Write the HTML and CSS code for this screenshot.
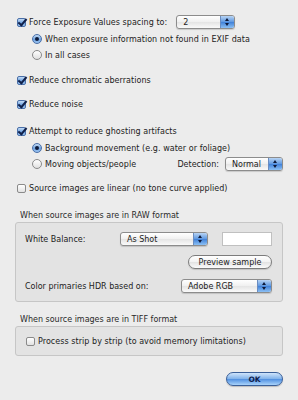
FILE: index.html
```html
<!DOCTYPE html>
<html>
<head>
<meta charset="utf-8">
<link rel="stylesheet" href="styles.css">
</head>
<body>
<div class="dialog">
  <div class="row r1">
    <span class="cb on"></span><span class="lbl">Force Exposure Values spacing to:</span>
    <span class="select sel-2"><span class="val">2</span><span class="arrows"></span></span>
  </div>
  <div class="row sub r2"><span class="radio on"></span><span class="lbl">When exposure information not found in EXIF data</span></div>
  <div class="row sub r3"><span class="radio"></span><span class="lbl">In all cases</span></div>
  <div class="row r4"><span class="cb on"></span><span class="lbl">Reduce chromatic aberrations</span></div>
  <div class="row r5"><span class="cb on"></span><span class="lbl">Reduce noise</span></div>
  <div class="row r6"><span class="cb on"></span><span class="lbl">Attempt to reduce ghosting artifacts</span></div>
  <div class="row sub r7"><span class="radio on"></span><span class="lbl">Background movement (e.g. water or foliage)</span></div>
  <div class="row sub r8"><span class="radio"></span><span class="lbl">Moving objects/people</span>
    <span class="det">Detection:</span>
    <span class="select sel-normal"><span class="val">Normal</span><span class="arrows"></span></span>
  </div>
  <div class="row r9"><span class="cb"></span><span class="lbl">Source images are linear (no tone curve applied)</span></div>

  <div class="group-title raw-title">When source images are in RAW format</div>
  <div class="group raw">
    <div class="grow g1">
      <span class="glbl">White Balance:</span>
      <span class="select sel-shot"><span class="val">As Shot</span><span class="arrows"></span></span>
      <span class="field"></span>
    </div>
    <div class="grow g2"><span class="btn">Preview sample</span></div>
    <div class="grow g3">
      <span class="glbl">Color primaries HDR based on:</span>
      <span class="select sel-rgb"><span class="val">Adobe RGB</span><span class="arrows"></span></span>
    </div>
  </div>

  <div class="group-title tiff-title">When source images are in TIFF format</div>
  <div class="group tiff">
    <div class="grow"><span class="cb"></span><span class="lbl">Process strip by strip (to avoid memory limitations)</span></div>
  </div>

  <div class="footer"><span class="ok">OK</span></div>
</div>
</body>
</html>
```
FILE: styles.css
```css
html, body { margin: 0; padding: 0; }
body {
  width: 298px; height: 400px; overflow: hidden;
  background: #ececec;
  font-family: "DejaVu Sans", "Liberation Sans", sans-serif;
  font-size: 8px;
  color: #1c1c1c;
}
.dialog { padding: 14px 15px 0 17px; display: flex; flex-direction: column; }
.row { display: flex; align-items: center; height: 16px; white-space: nowrap; }
.row.sub { padding-left: 15px; }
.r2 { margin-top: 1px; }
.r4 { margin-top: 9px; }
.r5 { margin-top: 8px; }
.r6 { margin-top: 11px; }
.r7 { margin-top: 1px; }
.r9 { margin-top: 8px; }

.cb {
  width: 9px; height: 9px; box-sizing: border-box; flex: none;
  border: 1px solid #8a8a8a; border-radius: 2px;
  background: linear-gradient(#ffffff, #e2e2e2);
  margin-right: 3px; position: relative;
}
.cb.on {
  border-color: #4a6fa8;
  background: linear-gradient(#c4dcf6, #6ea2e0 55%, #9cc4f0);
}
.cb.on::after {
  content: ""; position: absolute; left: 2px; top: -2px;
  width: 3px; height: 7px;
  border-right: 2px solid #10204a; border-bottom: 2px solid #10204a;
  transform: rotate(40deg);
}
.radio {
  width: 10px; height: 10px; box-sizing: border-box; flex: none;
  border: 1px solid #8a8a8a; border-radius: 50%;
  background: linear-gradient(#ffffff, #e0e0e0);
  margin-right: 3px; position: relative;
}
.radio.on {
  border-color: #4a6fa8;
  background: linear-gradient(#c4dcf6, #6ea2e0 55%, #9cc4f0);
}
.radio.on::after {
  content: ""; position: absolute; left: 2px; top: 2px;
  width: 4px; height: 4px; border-radius: 50%; background: #0e1a3a;
}
.lbl { letter-spacing: 0.05px; }

.select {
  display: flex; align-items: center; box-sizing: border-box;
  height: 14px; border: 1px solid #8c8c8c; border-radius: 3px;
  background: linear-gradient(#ffffff, #f0f0f0 50%, #e4e4e4 51%, #fafafa);
  box-shadow: 0 1px 1px rgba(0,0,0,0.15);
  overflow: hidden; flex: none;
}
.select .val { flex: 1; padding-left: 6px; }
.select .arrows {
  width: 13px; height: 100%; flex: none; position: relative;
  background: linear-gradient(#b8d4f4, #5d97e0 50%, #3f80d8 51%, #8cc0f4);
  border-left: 1px solid #6a8cc0;
}
.select .arrows::before, .select .arrows::after {
  content: ""; position: absolute; left: 4px;
  border-left: 2.5px solid transparent; border-right: 2.5px solid transparent;
}
.select .arrows::before { top: 2px; border-bottom: 3px solid #0e1a3a; }
.select .arrows::after { bottom: 2px; border-top: 3px solid #0e1a3a; }
.sel-2 { width: 59px; margin-left: 9px; }
.sel-normal { width: 58px; margin-left: 6px; }
.det { margin-left: auto; }
.r8 { padding-right: 0; }

.group-title { color: #2a2a2a; height: 10px; line-height: 10px; margin-top: 15px; padding-left: 3px; }
.tiff-title { margin-top: 13px; }
.group {
  margin-left: -2px; margin-right: 0;
  border: 1px solid #c6c6c6; border-radius: 3px;
  background: #e3e3e3; box-sizing: border-box;
}
.raw { height: 80px; padding: 0 10px 0 9px; margin-top: 1px; }
.grow { display: flex; align-items: center; white-space: nowrap; }
.g1 { margin-top: 9px; height: 14px; }
.sel-shot { width: 88px; margin-left: auto; margin-right: 14px; }
.field {
  width: 50px; height: 14px; box-sizing: border-box; background: #fff;
  border: 1px solid #c0c0c0; flex: none;
}
.g2 { margin-top: 9px; height: 14px; justify-content: flex-end; }
.btn {
  width: 84px; height: 14px; box-sizing: border-box;
  border: 1px solid #7c7c7c; border-radius: 7px;
  background: linear-gradient(#ffffff, #f2f2f2 50%, #e2e2e2 51%, #fbfbfb);
  display: flex; align-items: center; justify-content: center;
  box-shadow: 0 1px 1px rgba(0,0,0,0.15);
}
.g3 { margin-top: 10px; height: 14px; }
.sel-rgb { width: 91px; margin-left: auto; }

.tiff { height: 30px; margin-top: 1px; padding-left: 10px; display: flex; align-items: center; }

.footer { display: flex; justify-content: flex-end; margin-top: 16px; }
.ok {
  width: 57px; height: 14px; box-sizing: border-box;
  border: 1px solid #3a5f98; border-radius: 7px;
  background: linear-gradient(#cfe4fb, #7fb1ea 50%, #4f8fe0 51%, #a9d3fb);
  display: flex; align-items: center; justify-content: center;
  font-weight: bold; font-size: 7.5px; color: #10204a;
  box-shadow: 0 1px 1px rgba(0,0,0,0.2);
}
```
